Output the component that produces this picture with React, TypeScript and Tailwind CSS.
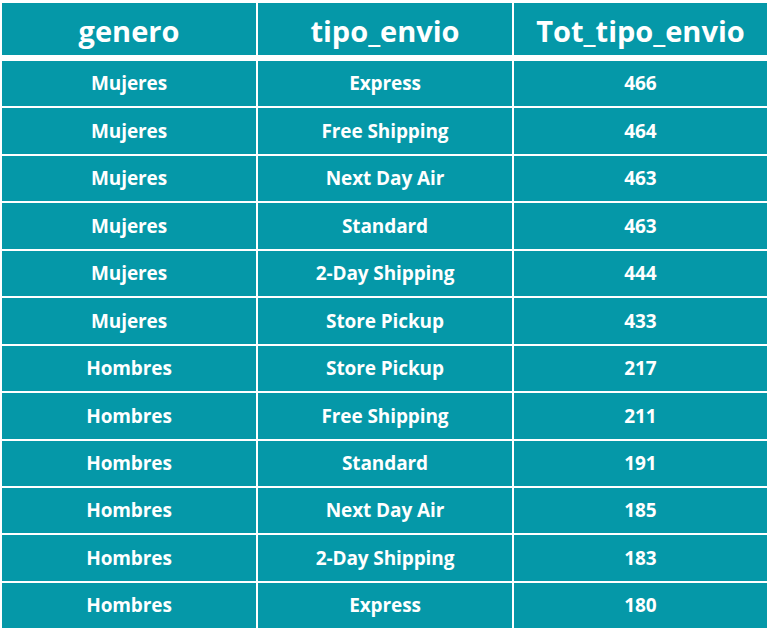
import React from "react";

const rows: [string, string, number][] = [
  ["Mujeres", "Express", 466],
  ["Mujeres", "Free Shipping", 464],
  ["Mujeres", "Next Day Air", 463],
  ["Mujeres", "Standard", 463],
  ["Mujeres", "2-Day Shipping", 444],
  ["Mujeres", "Store Pickup", 433],
  ["Hombres", "Store Pickup", 217],
  ["Hombres", "Free Shipping", 211],
  ["Hombres", "Standard", 191],
  ["Hombres", "Next Day Air", 185],
  ["Hombres", "2-Day Shipping", 183],
  ["Hombres", "Express", 180],
];

export default function App() {
  const font = { fontFamily: '"Open Sans", "Noto Sans", sans-serif' };
  return (
    <div className="w-[772px] h-[633px] bg-white pl-[2px] pt-[3px]" style={font}>
      <div className="w-[765px] flex flex-col">
        <div className="grid grid-cols-[254px_254px_253px] gap-x-[2px] h-[52px]">
          {["genero", "tipo_envio", "Tot_tipo_envio"].map((h) => (
            <div
              key={h}
              className="bg-[#0598a8] text-white font-bold text-[29px] tracking-[0px] flex items-center justify-center pt-[3px]"
            >
              {h}
            </div>
          ))}
        </div>
        <div className="h-[6px]" />
        <div className="flex flex-col gap-y-[2px]">
          {rows.map((r, i) => (
            <div
              key={i}
              className="grid grid-cols-[254px_254px_253px] gap-x-[2px] h-[45.45px]"
            >
              {r.map((c, j) => (
                <div
                  key={j}
                  className="bg-[#0598a8] text-white font-bold text-[19px] tracking-[-0.1px] flex items-center justify-center"
                >
                  {c}
                </div>
              ))}
            </div>
          ))}
        </div>
      </div>
    </div>
  );
}
